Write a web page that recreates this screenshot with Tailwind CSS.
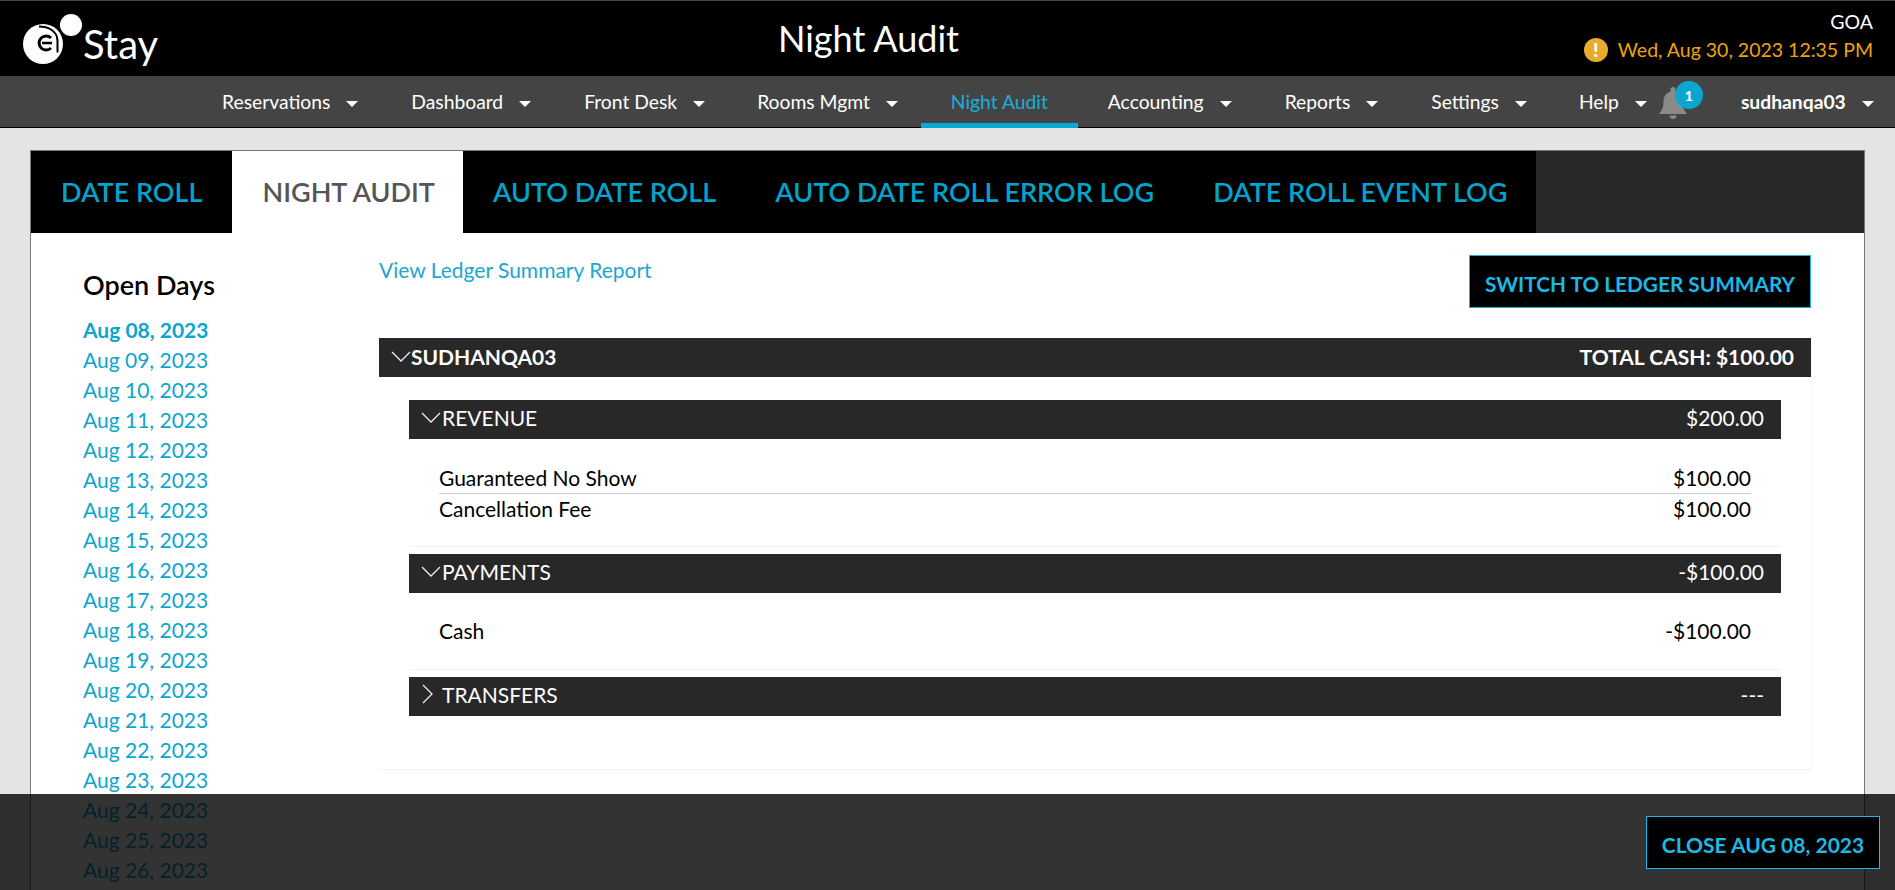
<!DOCTYPE html>
<html lang="en">
  <head>
    <meta charset="UTF-8" />
    <meta name="viewport" content="width=device-width, initial-scale=1.0" />
    <title>Night Audit</title>
    <script src="https://cdn.jsdelivr.net/npm/@tailwindcss/browser@4"></script>
  </head>
  <body class="h-[890px] overflow-hidden bg-[#e4e4e4] font-['Lato',sans-serif] text-black">
    <!-- top bar -->
    <header class="flex h-[76px] border-t border-[#444] bg-black text-white">
      <div class="flex w-[778px] shrink-0 items-start pl-[20px] pt-[10px]">
        <svg width="63" height="58" viewBox="0 0 63 58" class="shrink-0">
          <circle cx="23" cy="33" r="20" fill="#fff" />
          <circle cx="51" cy="14" r="11" fill="#fff" />
          <path d="M19 15.500c9 0 18 4 18.500 14v12" fill="none" stroke="#000" stroke-width="2" />
          <path d="M31 27a7 7 0 1 0 0 10" fill="none" stroke="#000" stroke-width="3" />
          <path d="M22 32h10" fill="none" stroke="#000" stroke-width="2.500" />
        </svg>
        <span class="mt-[10px] text-[40px] leading-[46px] font-normal">Stay</span>
      </div>
      <h1 class="w-[450px] pt-[13px] text-[36px] leading-[48px] font-normal">Night Audit</h1>
      <div class="flex-1 pr-[22px] pt-[9px] text-right">
        <div class="text-[19.5px] leading-[24px]">GOA</div>
        <div class="mt-[3px] flex items-center justify-end gap-[10px] text-[19.5px] leading-[26px] text-[#f0a30a]">
          <span class="flex h-6 w-6 items-center justify-center rounded-full bg-[#e8ab30] text-[19px] font-black text-white">!</span>
          Wed, Aug 30, 2023 12:35 PM
        </div>
      </div>
    </header>

    <!-- main nav -->
    <nav class="flex h-[52px] items-stretch border-b border-black bg-[#444] pl-[192px] pt-[2px] text-[19.300px] text-white">
      <a class="flex items-center pl-[30px] pr-[23px]">Reservations<span class="ml-[16px] mt-[3px] border-x-[6px] border-t-[6px] border-x-transparent border-t-white"></span></a>
      <a class="flex items-center pl-[30px] pr-[23px]">Dashboard<span class="ml-[16px] mt-[3px] border-x-[6px] border-t-[6px] border-x-transparent border-t-white"></span></a>
      <a class="flex items-center pl-[30px] pr-[22px]">Front Desk<span class="ml-[16px] mt-[3px] border-x-[6px] border-t-[6px] border-x-transparent border-t-white"></span></a>
      <a class="flex items-center pl-[30px] pr-[23px]">Rooms Mgmt<span class="ml-[16px] mt-[3px] border-x-[6px] border-t-[6px] border-x-transparent border-t-white"></span></a>
      <a class="-mb-px flex items-center border-b-[5px] border-[#08a8cf] px-[30px] pt-[4px] text-[#1eaedb]">Night Audit</a>
      <a class="flex items-center pl-[30px] pr-[23px]">Accounting<span class="ml-[16px] mt-[3px] border-x-[6px] border-t-[6px] border-x-transparent border-t-white"></span></a>
      <a class="flex items-center pl-[30px] pr-[23px]">Reports<span class="ml-[16px] mt-[3px] border-x-[6px] border-t-[6px] border-x-transparent border-t-white"></span></a>
      <a class="flex items-center pl-[30px] pr-[22px]">Settings<span class="ml-[16px] mt-[3px] border-x-[6px] border-t-[6px] border-x-transparent border-t-white"></span></a>
      <a class="flex items-center pl-[30px]">Help<span class="ml-[16px] mt-[3px] border-x-[6px] border-t-[6px] border-x-transparent border-t-white"></span></a>
      <div class="relative ml-[12px] w-[28px] pt-[9px]">
        <svg width="28" height="33" viewBox="0 0 28 33" fill="#8a8a8a">
          <path d="M14 0a2.500 2.500 0 0 1 2.500 2.500v2.200C21.500 6 23.500 10 23.500 15c0 5 1.500 8 4.500 12H0c3-4 4.500-7 4.500-12 0-5 2-9 7-10.300V2.500A2.500 2.500 0 0 1 14 0z" />
          <path d="M10.500 28.500h7a3.500 3.500 0 0 1-7 0z" />
        </svg>
        <span class="absolute left-[16px] top-[3px] flex h-[28px] w-[28px] items-center justify-center rounded-full bg-[#0ba6cf] text-[14px] font-black">1</span>
      </div>
      <a class="ml-[54px] flex items-center font-bold">sudhanqa03<span class="ml-[16px] mt-[3px] border-x-[6px] border-t-[6px] border-x-transparent border-t-white"></span></a>
    </nav>

    <!-- page card -->
    <main class="mx-[30px] mt-[22px] h-[740px] overflow-hidden border-x border-t border-[#777] bg-white">
      <div class="flex h-[82px] bg-[#282828] text-[27px] leading-[82px] font-semibold text-[#02a3cc]">
        <a class="bg-black pl-[30px] pr-[30px]">DATE ROLL</a>
        <a class="bg-white pl-[30px] pr-[28px] text-[#555]">NIGHT AUDIT</a>
        <a class="bg-black pl-[30px] pr-[29px]">AUTO DATE ROLL</a>
        <a class="bg-black pl-[30px] pr-[29px]">AUTO DATE ROLL ERROR LOG</a>
        <a class="bg-black pl-[30px] pr-[29px]">DATE ROLL EVENT LOG</a>
      </div>

      <div class="flex">
        <aside class="w-[348px] shrink-0 pl-[52px] pt-[34px]">
          <h2 class="mb-[12px] text-[27px] leading-[36px] font-semibold">Open Days</h2>
          <ul class="text-[21px] leading-[30px] text-[#0ba6cf]">
            <li class="font-bold">Aug 08, 2023</li>
            <li>Aug 09, 2023</li>
            <li>Aug 10, 2023</li>
            <li>Aug 11, 2023</li>
            <li>Aug 12, 2023</li>
            <li>Aug 13, 2023</li>
            <li>Aug 14, 2023</li>
            <li>Aug 15, 2023</li>
            <li>Aug 16, 2023</li>
            <li>Aug 17, 2023</li>
            <li>Aug 18, 2023</li>
            <li>Aug 19, 2023</li>
            <li>Aug 20, 2023</li>
            <li>Aug 21, 2023</li>
            <li>Aug 22, 2023</li>
            <li>Aug 23, 2023</li>
            <li>Aug 24, 2023</li>
            <li>Aug 25, 2023</li>
            <li>Aug 26, 2023</li>
          </ul>
        </aside>

        <section class="w-[1432px] shrink-0 pt-[22px]">
          <div class="flex items-start justify-between">
            <a class="mt-[1px] text-[21px] leading-[28px] text-[#1ba7cf]">View Ledger Summary Report</a>
            <button class="h-[53px] w-[342px] border border-[#1eaedb] bg-black pt-[4px] text-[20.800px] font-bold text-[#1cb8e6]">SWITCH TO LEDGER SUMMARY</button>
          </div>

          <div class="mt-[30px] border-b border-[#f3f3f3] pb-[53px] shadow-[1px_0_0_#f7f7f7]">
            <div class="flex h-[39px] items-center justify-between bg-[#282828] pb-[2px] pl-[12px] pr-[17px] text-[21px] font-bold text-white">
              <span class="flex items-center">
                <svg width="20" height="12" viewBox="0 0 20 12" fill="none" stroke="#eee" stroke-width="1.300"><path d="M1 1l9 9 9-9" /></svg>
                SUDHANQA03
              </span>
              <span>TOTAL CASH: $100.00</span>
            </div>

            <div class="mx-[30px] mt-[23px]">
              <div class="flex h-[39px] items-center justify-between bg-[#282828] pb-[3px] pl-[12px] pr-[17px] text-[21px] text-white">
                <span class="flex items-center gap-[1px]">
                  <svg width="20" height="12" viewBox="0 0 20 12" fill="none" stroke="#eee" stroke-width="1.300"><path d="M1 1l9 9 9-9" /></svg>
                  REVENUE
                </span>
                <span>$200.00</span>
              </div>
              <div class="border-b border-[#f3f3f3] px-[30px] pb-[22px] pt-[25px] text-[21px] leading-[28px]">
                <div class="flex h-[30px] justify-between border-b border-[#ccc]"><span>Guaranteed No Show</span><span>$100.00</span></div>
                <div class="flex h-[30px] items-center justify-between"><span>Cancellation Fee</span><span>$100.00</span></div>
              </div>

              <div class="mt-[7px] flex h-[39px] items-center justify-between bg-[#282828] pb-[3px] pl-[12px] pr-[17px] text-[21px] text-white">
                <span class="flex items-center gap-[1px]">
                  <svg width="20" height="12" viewBox="0 0 20 12" fill="none" stroke="#eee" stroke-width="1.300"><path d="M1 1l9 9 9-9" /></svg>
                  PAYMENTS
                </span>
                <span>-$100.00</span>
              </div>
              <div class="flex justify-between border-b border-[#f3f3f3] px-[30px] pb-[24px] pt-[24px] text-[21px] leading-[28px]"><span>Cash</span><span>-$100.00</span></div>

              <div class="mt-[7px] flex h-[39px] items-center justify-between bg-[#282828] pb-[4px] pl-[12px] pr-[17px] text-[21px] text-white">
                <span class="flex items-center gap-[8px]">
                  <svg width="13" height="20" viewBox="0 0 13 20" fill="none" stroke="#eee" stroke-width="1.300" class="-mt-[2px]"><path d="M2 1l9 9-9 9" /></svg>
                  TRANSFERS
                </span>
                <span>---</span>
              </div>
            </div>
          </div>
        </section>
      </div>
    </main>

    <!-- sticky footer over the page -->
    <footer class="fixed inset-x-0 bottom-0 flex h-[96px] items-start justify-end bg-black/80 pr-[15px] pt-[22px]">
      <button class="h-[53px] w-[234px] border border-[#1eb9e6] bg-black pt-[4px] text-[21px] font-bold text-[#1eb9e6]">CLOSE AUG 08, 2023</button>
    </footer>
  </body>
</html>
